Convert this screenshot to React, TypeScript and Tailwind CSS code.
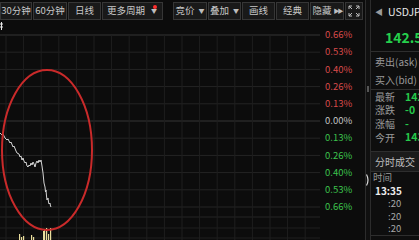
import React from "react";

const FONT = "font-['Noto_Sans_CJK_SC','Noto_Sans',sans-serif]";

const SCALE = [
  { v: "0.66%", c: "text-[#d84a4a]" },
  { v: "0.53%", c: "text-[#d84a4a]" },
  { v: "0.40%", c: "text-[#d84a4a]" },
  { v: "0.26%", c: "text-[#d84a4a]" },
  { v: "0.13%", c: "text-[#d84a4a]" },
  { v: "0.00%", c: "text-[#c4c4c4]" },
  { v: "0.13%", c: "text-[#3cc24c]" },
  { v: "0.26%", c: "text-[#3cc24c]" },
  { v: "0.40%", c: "text-[#3cc24c]" },
  { v: "0.53%", c: "text-[#3cc24c]" },
  { v: "0.66%", c: "text-[#3cc24c]" },
];

// price trace, chart coords (y relative to chart top at 20px)
const PRICE: [number, number][] = [
  [0, 113], [2, 115], [3, 114], [5, 118], [7, 120], [8, 119], [10, 123], [11, 122],
  [13, 127], [14, 126], [16, 131], [17, 133], [19, 134], [20, 137], [21, 136],
  [22, 140], [23, 138], [24, 141], [25, 143], [26, 142], [27, 146], [28, 147],
  [29, 145], [30, 146], [31, 143], [32, 145], [33, 142], [34, 144], [35, 147],
  [36, 143], [37, 141], [38, 143], [39, 140], [40, 142], [41, 140], [42, 146],
  [43, 153], [43.5, 158], [44, 163], [45, 167], [45.5, 172], [46, 170], [46.5, 176],
  [47, 180], [48, 178], [48.5, 182], [49, 184], [50, 183], [50.5, 186], [51, 187],
];

const VOLUME: [number, number][] = [
  [19, 6], [21, 3], [23, 4], [31, 5], [33, 3], [43, 9], [44, 11], [46, 12], [48, 6], [50, 12],
];

const HLINES = Array.from({ length: 11 }, (_, i) => 15 + i * 17.2);
const VLINES = Array.from({ length: 18 }, (_, i) => 6 + i * 17.6);

function Caret({ className = "ml-[4px]" }: { className?: string }) {
  return <span className={`${className} text-[6px] text-[#bdbdbd]`}>▼</span>;
}

function ToolBtn({ w, children, className = "" }: { w: string; children: React.ReactNode; className?: string }) {
  return (
    <div
      className={`${w} ${className} h-[18px] shrink-0 flex items-center justify-center border border-[#363636] bg-[#191919] text-[9.5px] text-[#c8c8c8] relative`}
    >
      {children}
    </div>
  );
}

function Chart() {
  return (
    <svg width={320} height={220} className="block">
      {HLINES.map((y, i) => (
        <line key={i} x1={0} x2={320} y1={y} y2={y} stroke={i === 0 || i === 5 ? "#353535" : "#242424"} strokeWidth={1} />
      ))}
      <line x1={0} x2={320} y1={197} y2={197} stroke="#242424" />
      <line x1={0} x2={320} y1={208} y2={208} stroke="#1e1e1e" />
      <line x1={0} x2={320} y1={218} y2={218} stroke="#1e1e1e" />
      {VLINES.map((x, i) => (
        <line key={i} x1={x} x2={x} y1={15} y2={220} stroke="#1e1e1e" strokeWidth={1} />
      ))}
      {VOLUME.map(([x, h], i) => (
        <rect key={i} x={x} y={220 - h} width={1.2} height={h} fill="#e8dd9c" />
      ))}
      <polyline
        points={PRICE.map(([x, y]) => `${x},${y}`).join(" ")}
        fill="none"
        stroke="#d4d4d4"
        strokeWidth={1}
      />
      <ellipse cx={47} cy={130} rx={45} ry={80} fill="none" stroke="#c92a2a" strokeWidth={2} />
      <path d="M1.5 2 V10 M0 4 H3 M0 7 H3" stroke="#e8e8e8" strokeWidth={1} />
    </svg>
  );
}

function StatRow({ label, value }: { label: string; value: string }) {
  return (
    <div className="h-[13.6px] flex items-center gap-[10px] whitespace-nowrap">
      <span className="text-[10px] text-[#9a9a9a]">{label}</span>
      <span className="text-[10.5px] font-bold text-[#25c94a]">{value}</span>
    </div>
  );
}

export default function App() {
  return (
    <div className={`w-[419px] h-[240px] overflow-hidden bg-[#0c0c0c] flex leading-none ${FONT}`}>
      {/* chart side */}
      <div className="w-[365px] shrink-0 flex flex-col">
        <div className="h-[20px] flex items-center gap-[1px] pt-[1px]">
          <ToolBtn w="w-[32px]">30分钟</ToolBtn>
          <ToolBtn w="w-[34px]">60分钟</ToolBtn>
          <ToolBtn w="w-[33px]">日线</ToolBtn>
          <ToolBtn w="w-[61px]" className="justify-start pl-[4px]">
            更多周期<Caret className="ml-[6px]" />
            <span className="absolute right-[5px] top-[2px] w-[4px] h-[4px] rounded-full bg-[#ff2f2f]" />
          </ToolBtn>
          <ToolBtn w="w-[34px]" className="ml-[9px]">
            竞价<Caret />
          </ToolBtn>
          <ToolBtn w="w-[33px]">
            叠加<Caret />
          </ToolBtn>
          <ToolBtn w="w-[33px]">画线</ToolBtn>
          <ToolBtn w="w-[33px]">经典</ToolBtn>
          <ToolBtn w="w-[34px]">
            隐藏<span className="ml-[2px] text-[6px] tracking-[-2px] text-[#bdbdbd]">▶▶</span>
          </ToolBtn>
          <div className="w-[18px] h-[18px] shrink-0 flex items-center justify-center border border-[#363636] bg-[#191919]">
            <svg width={12} height={12} viewBox="0 0 12 12" fill="none" stroke="#bdbdbd" strokeWidth={1}>
              <path d="M1 4V1H4M1 1L4 4M8 1H11V4M11 1L8 4M1 8V11H4M1 11L4 8M8 11H11V8M11 11L8 8" />
            </svg>
          </div>
        </div>
        <div className="flex flex-1">
          <div className="w-[320px] shrink-0">
            <Chart />
          </div>
          <div className="flex-1 flex flex-col pt-[6.4px] pl-[5px]">
            {SCALE.map((s, i) => (
              <div key={i} className={`h-[17.2px] flex items-center text-[9.5px] ${s.c}`}>
                {s.v}
              </div>
            ))}
          </div>
        </div>
      </div>

      {/* splitter */}
      <div className="w-[6px] shrink-0 border-x border-[#2c2c2c] bg-[#101010] flex flex-col items-center">
        <div className="mt-[86px] w-[2px] h-[6px] bg-[#555]" />
        <svg width={4} height={12} className="mt-[82px]" viewBox="0 0 4 12">
          <path d="M0.5 0.5 Q3.5 6 0.5 11.5" stroke="#d8d8d8" strokeWidth={1.2} fill="none" />
        </svg>
      </div>

      {/* quote panel */}
      <div className="flex-1 min-w-0 flex flex-col bg-[#0e0e0e]">
        <div className="h-[52px] border-b border-[#2e2e2e] pl-[4px] flex flex-col">
          <div className="h-[14px] mt-[5px] flex items-center gap-[5px] whitespace-nowrap">
            <span className="text-[8px] text-[#9a9a9a]">◀</span>
            <span className="text-[10.5px] text-[#e6e6e6]">USDJPY</span>
          </div>
          <div className="h-[20px] mt-[8px] pl-[10px] flex items-center text-[14px] font-bold text-[#25d04c] whitespace-nowrap">
            142.5
          </div>
        </div>
        <div className="h-[38px] border-b border-[#2e2e2e] pl-[4px] pt-[1px] flex flex-col">
          <div className="h-[18px] flex items-center text-[10px] text-[#9a9a9a] whitespace-nowrap">卖出(ask)</div>
          <div className="h-[18px] flex items-center text-[10px] text-[#9a9a9a] whitespace-nowrap">买入(bid)</div>
        </div>
        <div className="h-[62px] border-b border-[#2e2e2e] pl-[4px] flex flex-col">
          <StatRow label="最新" value="142" />
          <StatRow label="涨跌" value="-0" />
          <StatRow label="涨幅" value="-" />
          <StatRow label="今开" value="143" />
        </div>
        <div className="h-[20px] bg-[#1b1b1b] border-b border-[#2e2e2e] pl-[4px] flex items-center text-[10px] text-[#bdbdbd] whitespace-nowrap">
          分时成交
        </div>
        <div className="flex flex-col pl-[2px] border-b border-[#2e2e2e] h-[64px]">
          <div className="h-[12px] flex items-center text-[9.5px] text-[#9a9a9a]">时间</div>
          <div className="h-[13px] mt-[1px] pl-[2px] flex items-center text-[10px] font-bold text-[#ececec]">13:35</div>
          {[0, 1, 2].map((i) => (
            <div key={i} className="h-[12.4px] pl-[15px] flex items-center text-[9.5px] text-[#a8a8a8]">
              :20
            </div>
          ))}
        </div>
      </div>
    </div>
  );
}
